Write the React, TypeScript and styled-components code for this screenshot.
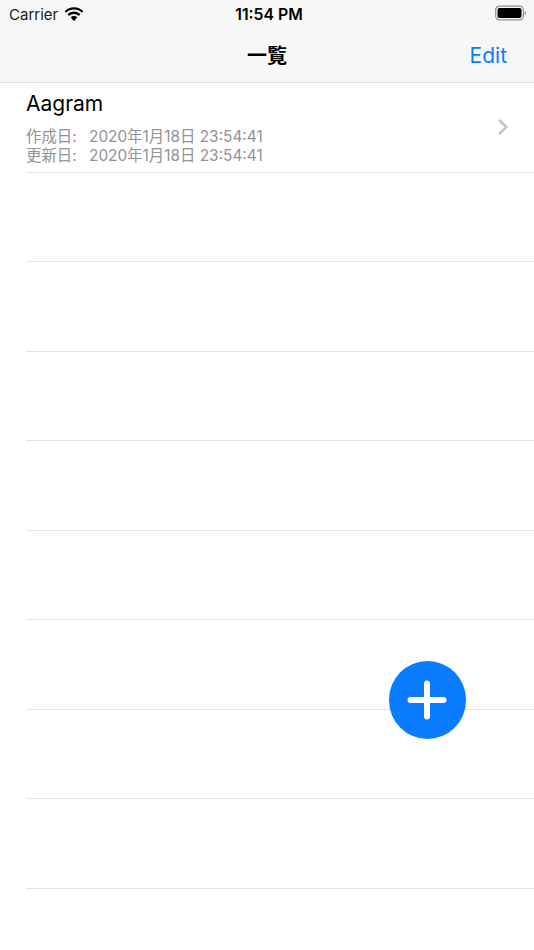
import React from "react";
import styled, { createGlobalStyle } from "styled-components";

const GlobalStyle = createGlobalStyle`
  html, body {
    margin: 0;
    padding: 0;
    background: #fff;
    font-family: Inter, "Liberation Sans", "Noto Sans CJK JP", sans-serif;
  }
`;

const Screen = styled.div`
  position: relative;
  width: 534px;
  height: 950px;
  overflow: hidden;
  background: #fff;
`;

const Header = styled.header`
  height: 82px;
  background: #f7f7f7;
  border-bottom: 1.5px solid #dfdfdf;
  display: flex;
  flex-direction: column;
`;

const StatusBar = styled.div`
  height: 28px;
  display: grid;
  grid-template-columns: 1fr auto 1fr;
  align-items: center;
  padding: 0 7px 0 9px;
  color: #000;
`;

const Carrier = styled.div`
  display: flex;
  align-items: center;
  gap: 6px;
  font-size: 15px;
  color: #1a1a1a;
`;

const Clock = styled.div`
  font-size: 15.8px;
  font-weight: 600;
  margin-left: 2px;
`;

const BatteryWrap = styled.div`
  display: flex;
  justify-content: flex-end;
  margin-top: -2px;
`;

const NavBar = styled.div`
  flex: 1;
  display: grid;
  grid-template-columns: 1fr auto 1fr;
  align-items: center;
  padding: 0 27px 1px;
`;

const Title = styled.div`
  font-size: 20px;
  font-weight: 700;
  font-family: "Noto Sans CJK JP", sans-serif;
  color: #000;
`;

const EditButton = styled.div`
  justify-self: end;
  font-size: 21px;
  color: #0a7cff;
  padding-top: 1px;
`;

const List = styled.div`
  display: flex;
  flex-direction: column;
`;

const Row = styled.div`
  height: 89.5px;
  box-sizing: border-box;
  margin-left: 26px;
  border-bottom: 1px solid #e4e4e6;
  display: flex;
  align-items: center;
  justify-content: space-between;
  padding-right: 25px;
`;

const RowBody = styled.div`
  display: flex;
  flex-direction: column;
  align-self: flex-start;
  padding-top: 7px;
`;

const RowTitle = styled.div`
  font-size: 21px;
  line-height: 28px;
  color: #000;
  margin-bottom: 10px;
`;

const MetaLine = styled.div`
  display: flex;
  font-size: 15.4px;
  line-height: 18.6px;
  color: #929297;
  font-family: Inter, "Noto Sans CJK JP", sans-serif;
`;

const MetaLabel = styled.span`
  width: 63px;
`;

const AddButton = styled.button`
  position: absolute;
  left: 388.5px;
  top: 661px;
  width: 77.5px;
  height: 77.5px;
  border: 0;
  padding: 0;
  border-radius: 50%;
  background: #0a7cff;
  display: flex;
  align-items: center;
  justify-content: center;
`;

const WifiIcon = () => (
  <svg width="20" height="15" viewBox="0 0 20 15">
    <path d="M10 2.6c3 0 5.8 1.2 7.9 3.2l1.4-1.6C16.8 1.7 13.5 .2 10 .2S3.2 1.7 .7 4.2l1.4 1.6C4.2 3.8 7 2.6 10 2.6z" fill="#000" />
    <path d="M10 6.9c1.9 0 3.6.7 4.9 2l1.5-1.7C14.7 5.6 12.4 4.6 10 4.6S5.3 5.6 3.6 7.2l1.5 1.7c1.3-1.3 3-2 4.9-2z" fill="#000" />
    <path d="M10 9c-1.3 0-2.4.5-3.3 1.3L10 14.2l3.3-3.9C12.4 9.5 11.3 9 10 9z" fill="#000" />
  </svg>
);

const BatteryIcon = () => (
  <svg width="32" height="16" viewBox="0 0 32 16">
    <rect x="0.7" y="1.2" width="27.6" height="13.6" rx="3.6" fill="none" stroke="#8f8f8f" strokeWidth="1.2" />
    <rect x="2.5" y="3" width="24" height="10" rx="2" fill="#000" />
    <path d="M29.6 6v4c.9-.3 1.5-1.1 1.5-2s-.6-1.7-1.5-2z" fill="#8f8f8f" />
  </svg>
);

const Chevron = () => (
  <svg width="12" height="18" viewBox="0 0 12 18">
    <path d="M2 2l7.5 7L2 16" fill="none" stroke="#c4c4c7" strokeWidth="2.4" />
  </svg>
);

const PlusIcon = () => (
  <svg width="40" height="40" viewBox="0 0 40 40">
    <path d="M20 3.5v33M3.5 20h33" stroke="#fff" strokeWidth="6" strokeLinecap="round" />
  </svg>
);

const emptyRows = Array.from({ length: 8 }, (_, i) => i);

export default function App() {
  return (
    <Screen>
      <GlobalStyle />
      <Header>
        <StatusBar>
          <Carrier>
            Carrier
            <WifiIcon />
          </Carrier>
          <Clock>11:54 PM</Clock>
          <BatteryWrap>
            <BatteryIcon />
          </BatteryWrap>
        </StatusBar>
        <NavBar>
          <span />
          <Title>一覧</Title>
          <EditButton>Edit</EditButton>
        </NavBar>
      </Header>
      <List>
        <Row>
          <RowBody>
            <RowTitle>Aagram</RowTitle>
            <MetaLine>
              <MetaLabel>作成日:</MetaLabel>
              2020年1月18日 23:54:41
            </MetaLine>
            <MetaLine>
              <MetaLabel>更新日:</MetaLabel>
              2020年1月18日 23:54:41
            </MetaLine>
          </RowBody>
          <Chevron />
        </Row>
        {emptyRows.map((i) => (
          <Row key={i} />
        ))}
      </List>
      <AddButton aria-label="add">
        <PlusIcon />
      </AddButton>
    </Screen>
  );
}
